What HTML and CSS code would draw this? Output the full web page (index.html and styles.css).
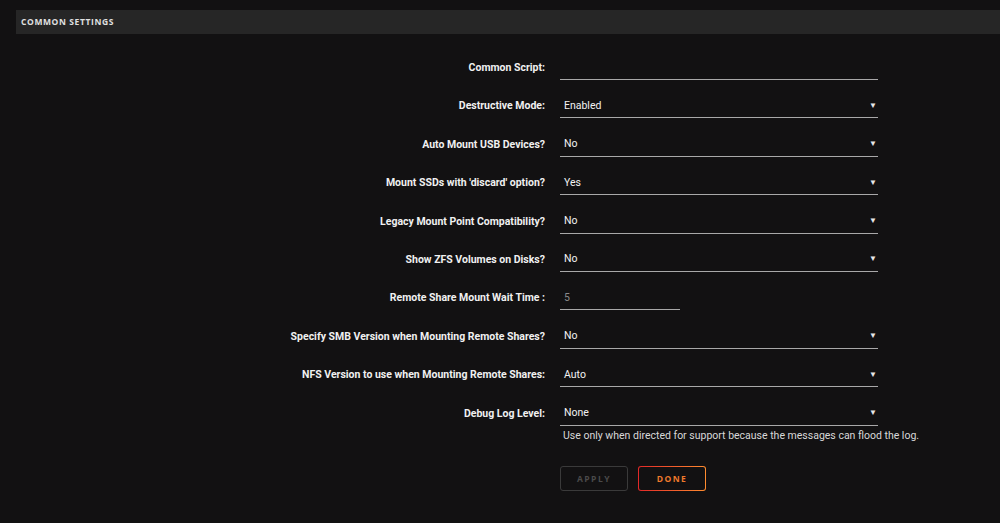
FILE: index.html
```html
<!DOCTYPE html>
<html lang="en">

<head>
    <meta charset="UTF-8">
    <meta name="viewport" content="width=device-width, initial-scale=1.0">
    <title>Common Settings</title>
    <link rel="stylesheet" href="styles.css">
</head>

<body>
    <div class="title-bar">Common Settings</div>

    <form class="settings">
        <div class="row">
            <label>Common Script:</label>
            <div class="field"><span class="value"></span></div>
        </div>
        <div class="row">
            <label>Destructive Mode:</label>
            <div class="field select"><span class="value">Enabled</span><span class="caret">&#9660;</span></div>
        </div>
        <div class="row">
            <label>Auto Mount USB Devices?</label>
            <div class="field select"><span class="value">No</span><span class="caret">&#9660;</span></div>
        </div>
        <div class="row">
            <label>Mount SSDs with 'discard' option?</label>
            <div class="field select"><span class="value">Yes</span><span class="caret">&#9660;</span></div>
        </div>
        <div class="row">
            <label>Legacy Mount Point Compatibility?</label>
            <div class="field select"><span class="value">No</span><span class="caret">&#9660;</span></div>
        </div>
        <div class="row">
            <label>Show ZFS Volumes on Disks?</label>
            <div class="field select"><span class="value">No</span><span class="caret">&#9660;</span></div>
        </div>
        <div class="row">
            <label>Remote Share Mount Wait Time :</label>
            <div class="field short"><span class="value muted">5</span></div>
        </div>
        <div class="row">
            <label>Specify SMB Version when Mounting Remote Shares?</label>
            <div class="field select"><span class="value">No</span><span class="caret">&#9660;</span></div>
        </div>
        <div class="row">
            <label>NFS Version to use when Mounting Remote Shares:</label>
            <div class="field select"><span class="value">Auto</span><span class="caret">&#9660;</span></div>
        </div>
        <div class="row">
            <label>Debug Log Level:</label>
            <div class="field select"><span class="value">None</span><span class="caret">&#9660;</span></div>
        </div>
        <div class="help">Use only when directed for support because the messages can flood the log.</div>

        <div class="buttons">
            <button type="button" class="btn disabled">Apply</button>
            <button type="button" class="btn done">Done</button>
        </div>
    </form>
</body>

</html>
```

FILE: styles.css
```css
body {
    margin: 0;
    background-color: #121112;
    color: #f2f2f2;
    font-family: Roboto, 'Noto Sans', sans-serif;
    font-size: 10.5px;
}

.title-bar {
    margin: 10px 0 0 16px;
    height: 24px;
    line-height: 24px;
    padding-left: 5px;
    background-color: #262626;
    color: #e0e0e0;
    font-family: 'Open Sans', sans-serif;
    font-size: 8.5px;
    font-weight: 700;
    letter-spacing: 0.6px;
    text-transform: uppercase;
}

.settings {
    padding-top: 19px;
}

.row {
    display: flex;
    align-items: flex-start;
    height: 38.4px;
}

.row label {
    width: 545px;
    margin-right: 15px;
    text-align: right;
    font-weight: 700;
    line-height: 30px;
    color: #f0f0f0;
}

.field {
    display: flex;
    justify-content: space-between;
    align-items: center;
    width: 318px;
    height: 25px;
    margin-top: 2px;
    padding: 0 1px 0 4px;
    box-sizing: border-box;
    border-bottom: 1px solid #a8a8a8;
}

.field.short {
    width: 120px;
}

.value {
    color: #f2f2f2;
}

.value.muted {
    color: #8a8a8a;
}

.caret {
    font-size: 8px;
    color: #e8e8e8;
}

.help {
    margin: -8px 0 0 563px;
    color: #d8d8d8;
}

.buttons {
    display: flex;
    gap: 10px;
    margin: 24px 0 0 560px;
}

.btn {
    width: 68px;
    height: 25px;
    background: transparent;
    font-family: 'Open Sans', 'Noto Sans', sans-serif;
    font-size: 8.5px;
    font-weight: 700;
    letter-spacing: 1.5px;
    text-transform: uppercase;
    border-radius: 3px;
    cursor: pointer;
}

.btn.disabled {
    border: 1px solid #3a3a3a;
    color: #4a4a4a;
    cursor: default;
}

.btn.done {
    border: 1px solid transparent;
    background: linear-gradient(#121112, #121112) padding-box,
        linear-gradient(90deg, #e22828, #ff8c2f) border-box;
    color: #f0792c;
}
```
